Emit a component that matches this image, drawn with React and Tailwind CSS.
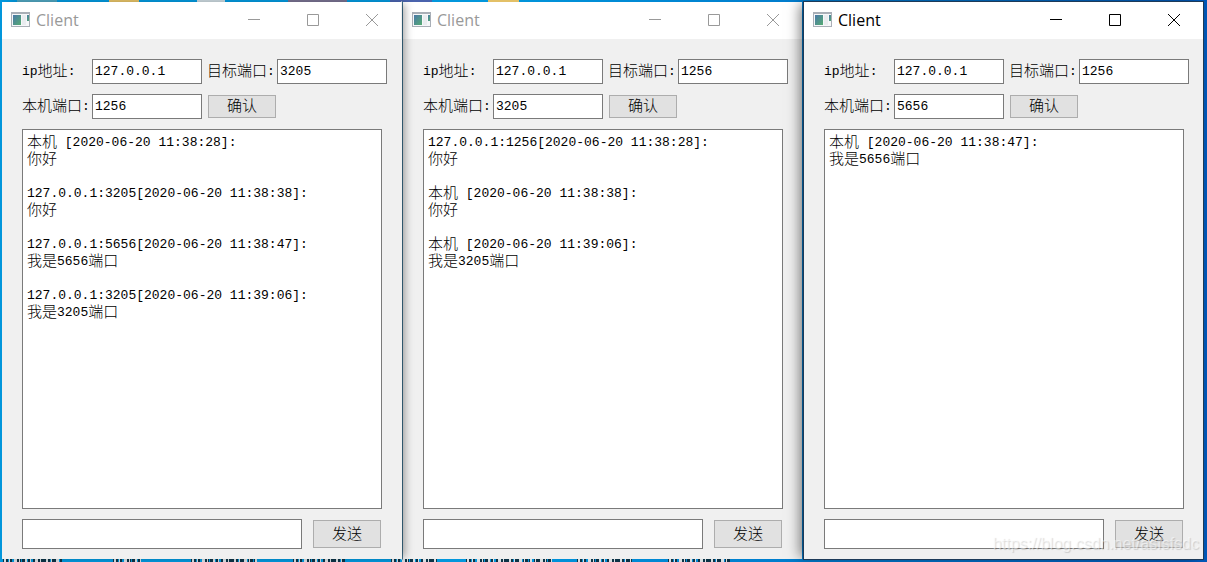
import React from 'react';

const clients = [
  {
    id: 'a',
    target: '3205',
    local: '1256',
    frame: 'z-10 border-transparent border-r-[#f0f0f0] shadow-[6px_0_8px_-3px_rgba(0,0,0,0.35)]',
    log: [
      '本机 [2020-06-20 11:38:28]:', '你好', '',
      '127.0.0.1:3205[2020-06-20 11:38:38]:', '你好', '',
      '127.0.0.1:5656[2020-06-20 11:38:47]:', '我是5656端口', '',
      '127.0.0.1:3205[2020-06-20 11:39:06]:', '我是3205端口',
    ],
  },
  {
    id: 'b',
    target: '1256',
    local: '3205',
    frame: 'border-transparent border-l-[#3f7390]',
    log: [
      '127.0.0.1:1256[2020-06-20 11:38:28]:', '你好', '',
      '本机 [2020-06-20 11:38:38]:', '你好', '',
      '本机 [2020-06-20 11:39:06]:', '我是3205端口',
    ],
  },
  {
    id: 'c',
    target: '1256',
    local: '5656',
    active: true,
    frame: 'z-10 border-[#1d3a58] shadow-[-6px_0_12px_-3px_rgba(0,0,0,0.5)]',
    log: ['本机 [2020-06-20 11:38:47]:', '我是5656端口'],
  },
];

// [x, width, colour] of the desktop icons showing above the windows
const iconEdges = [
  [17, 40, '#4fa3bd'],
  [109, 30, '#e3c067'],
  [197, 28, '#c9d6dc'],
  [288, 59, '#77708f'],
  [390, 42, '#4a63ad'],
  [488, 31, '#e3c067'],
];

// [x, width] of the desktop icon captions showing below the windows
const captions = [
  [3, 59], [113, 30], [191, 67], [293, 52], [391, 46], [466, 87], [577, 55], [668, 62],
];

// Latin runs use the mono face, Chinese runs are set slightly larger
const Mixed = ({ text }) => (
  <span className="flex h-[17px] items-start whitespace-pre">
    {text.split(/([\u4e00-\u9fff]+)/).filter(Boolean).map((run, i) => (
      <span
        key={i}
        className={/[\u4e00-\u9fff]/.test(run) ? "font-['Noto_Sans_CJK_SC',sans-serif] text-[15px] leading-[14px] font-light" : 'leading-[17px]'}
      >
        {run}
      </span>
    ))}
  </span>
);

const AppIcon = () => (
  <svg width="20" height="16" viewBox="0 0 20 16">
    <defs>
      <linearGradient id="pane" x1="0" y1="0" x2="1" y2="1">
        <stop offset="0" stopColor="#4a78a8" />
        <stop offset="1" stopColor="#55ab72" />
      </linearGradient>
    </defs>
    <path d="M0 0h19v15H0z" fill="#a9afb7" />
    <path d="M1 2h17v12H1z" fill="#f6f7f9" />
    <path d="M2 3h8v10H2z" fill="url(#pane)" />
    <path d="M11 3h4v10h-4z" fill="#e9ecef" />
    <path d="M16 3h2v6h-2z" fill="url(#pane)" />
  </svg>
);

const Desktop = () => (
  <>
    <svg className="absolute top-0 left-0 h-0.5 w-full" shapeRendering="crispEdges">
      {iconEdges.map(([x, width, fill]) => (
        <rect key={x} x={x} width={width} height="2" fill={fill} />
      ))}
    </svg>
    <svg className="absolute bottom-0 left-0 h-[3px] w-full" shapeRendering="crispEdges">
      {captions.map(([x, width]) => (
        <g key={x} strokeWidth="3">
          <path d={`M${x} 1.5h${width}`} stroke="#0d3346" strokeDasharray="5 1 3 2 7 1" />
          <path d={`M${x + 1} 1.5h${width - 2}`} stroke="#d9dfe2" strokeDasharray="2 3 1 4 3 2 1 5" />
        </g>
      ))}
    </svg>
  </>
);

const TitleBar = ({ active }) => (
  <header className={`flex h-[37px] items-center bg-white pb-px pl-[9px] ${active ? 'text-black' : 'text-[#999999]'}`}>
    <AppIcon />
    <h1 className="ml-[5px] flex-1 font-['Open_Sans',sans-serif] text-base">Client</h1>
    <div className="flex gap-[47px] pr-[23px]">
      <button type="button" aria-label="Minimize">
        <svg width="12" height="12" viewBox="0 0 12 12" stroke="currentColor">
          <path d="M0 5.5h12" />
        </svg>
      </button>
      <button type="button" aria-label="Maximize">
        <svg width="12" height="12" viewBox="0 0 12 12" stroke="currentColor" fill="none">
          <path d="M.5.5h11v11H.5z" />
        </svg>
      </button>
      <button type="button" aria-label="Close">
        <svg width="12" height="12" viewBox="0 0 12 12" stroke="currentColor">
          <path d="M0 0l12 12M12 0L0 12" />
        </svg>
      </button>
    </div>
  </header>
);

const Field = ({ id, label, value }) => (
  <>
    <label htmlFor={id} className="w-[70px] shrink-0">
      <Mixed text={label} />
    </label>
    <input
      id={id}
      defaultValue={value}
      className="h-[25px] w-[110px] min-w-0 border border-[#7a7a7a] bg-white px-0.5 outline-none"
    />
  </>
);

const PushButton = ({ children, className }) => (
  <button
    type="button"
    className={`flex w-[68px] shrink-0 items-center justify-center border border-[#adadad] bg-[#e1e1e1] ${className}`}
  >
    <Mixed text={children} />
  </button>
);

const ClientWindow = ({ client }) => (
  <section
    className={`relative flex min-w-0 flex-1 flex-col border bg-[#f0f0f0] bg-clip-padding ${client.frame}`}
  >
    <TitleBar active={client.active} />
    <form className="flex flex-col pt-5 pr-[19px] pb-2.5 pl-5" onSubmit={(e) => e.preventDefault()}>
      <div className="-mr-2 flex items-center">
        <Field id={`${client.id}-ip`} label="ip地址:" value="127.0.0.1" />
        <span className="w-[5px]" />
        <Field id={`${client.id}-target`} label="目标端口:" value={client.target} />
      </div>
      <div className="mt-2.5 flex items-center">
        <Field id={`${client.id}-local`} label="本机端口:" value={client.local} />
        <PushButton className="ml-1.5 h-[23px]">确认</PushButton>
      </div>
      <div className="mt-2.5 h-[380px] border border-[#7a7a7a] bg-white px-1 pt-1">
        {client.log.map((line, i) => (
          <p key={i}>
            <Mixed text={line} />
          </p>
        ))}
      </div>
      <div className="mt-2.5 flex items-center gap-[11px] pr-px">
        <input
          aria-label="消息"
          className="h-[30px] min-w-0 flex-1 border border-[#7a7a7a] bg-white px-0.5 outline-none"
        />
        <PushButton className="h-7">发送</PushButton>
      </div>
    </form>
  </section>
);

const App = () => (
  <main className="relative overflow-hidden bg-linear-to-r from-[#0397dc] from-40% to-[#0058b8] pt-px pr-[3px] pb-0.5 pl-px font-['Liberation_Mono','Noto_Sans_CJK_SC',monospace] text-[13px] text-black">
    <Desktop />
    <div className="flex">
      {clients.map((client) => (
        <ClientWindow key={client.id} client={client} />
      ))}
    </div>
    <p className="pointer-events-none absolute right-2 bottom-1.5 z-20 font-['Liberation_Sans',sans-serif] text-base text-white/50 text-shadow-[1px_1px_1px_rgb(0_0_0_/_0.15)]">
      https://blog.csdn.net/asfsfsdc
    </p>
  </main>
);

export default App;
